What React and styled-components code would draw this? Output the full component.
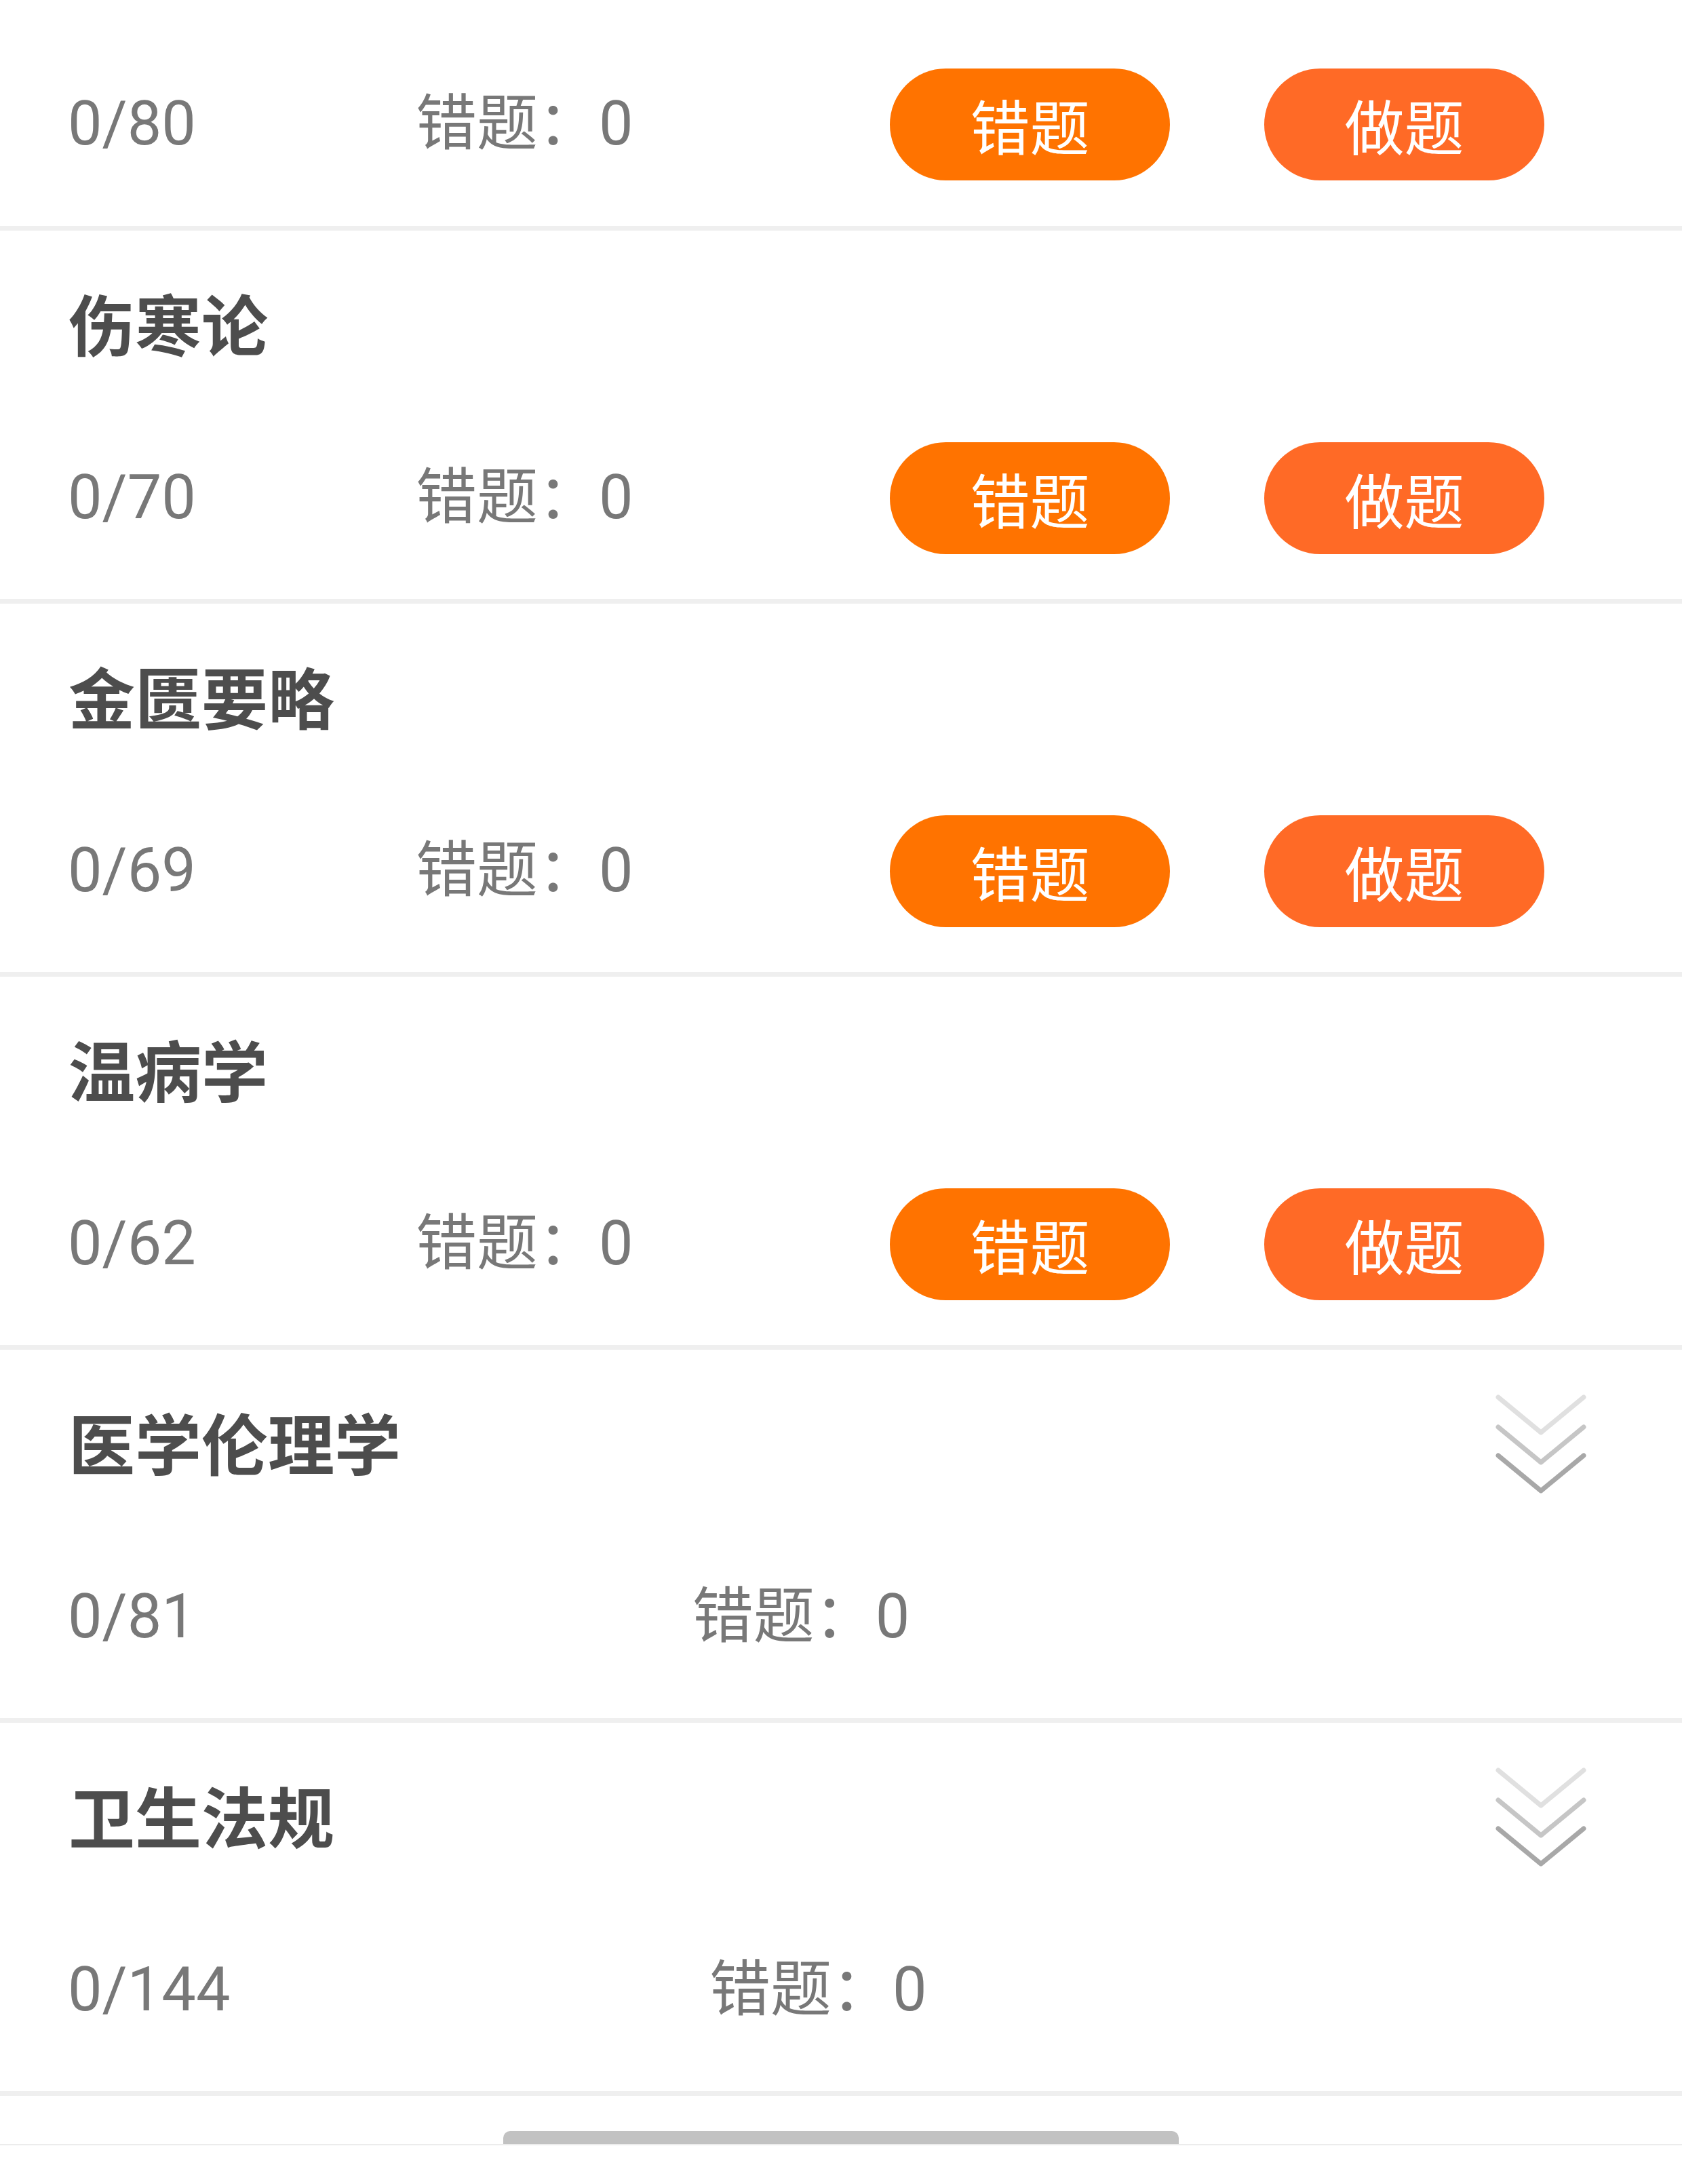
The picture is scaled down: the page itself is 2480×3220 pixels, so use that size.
import React from "react"
import styled, { createGlobalStyle } from "styled-components"

const GlobalStyle = createGlobalStyle`
  html, body {
    margin: 0;
    padding: 0;
    background: #ffffff;
  }
  body {
    font-family: Roboto, "Noto Sans CJK SC", sans-serif;
  }
`

const subjects = [
  { title: null, done: 0, total: 80, wrong: 0, open: true },
  { title: "伤寒论", done: 0, total: 70, wrong: 0, open: true },
  { title: "金匮要略", done: 0, total: 69, wrong: 0, open: true },
  { title: "温病学", done: 0, total: 62, wrong: 0, open: true },
  { title: "医学伦理学", done: 0, total: 81, wrong: 0, open: false },
  { title: "卫生法规", done: 0, total: 144, wrong: 0, open: false },
]

const Chevrons = () => (
  <ChevronIcon viewBox="0 0 136 152" width="136" height="152">
    <path d="M5 8 L68 60 L131 8" stroke="#e0e0e0" />
    <path d="M5 52 L68 104 L131 52" stroke="#c6c6c6" />
    <path d="M5 94 L68 146 L131 94" stroke="#a8a8a8" />
  </ChevronIcon>
)

const Subject = ({ title, done, total, wrong, open }) => (
  <Section $partial={!title}>
    {title && (
      <Header>
        <Title>{title}</Title>
        {!open && <Chevrons />}
      </Header>
    )}
    <Stats $open={open}>
      <Count $open={open}>
        {done}/{total}
      </Count>
      <Wrong $open={open}>错题：{wrong}</Wrong>
      {open && (
        <>
          <Pill $tone="wrong">错题</Pill>
          <Pill $tone="practice">做题</Pill>
        </>
      )}
    </Stats>
  </Section>
)

const App = () => {
  return (
    <Page>
      <GlobalStyle />
      <List>
        {subjects.map((s, i) => (
          <Subject key={i} {...s} />
        ))}
      </List>
      <Footer>
        <HomeBar />
        <FooterLine />
      </Footer>
    </Page>
  )
}

const Page = styled.div`
  width: 2480px;
  min-height: 3220px;
  background: #ffffff;
  display: flex;
  flex-direction: column;
`

const List = styled.div`
  display: flex;
  flex-direction: column;
`

const Section = styled.section`
  padding: ${(p) => (p.$partial ? "100px 0 67px" : "74px 0 66px")};
  border-bottom: 7px solid #efefef;
  display: flex;
  flex-direction: column;
`

const Header = styled.div`
  height: 120px;
  margin-bottom: 117px;
  padding: 0 140px 0 101px;
  display: flex;
  align-items: center;
  justify-content: space-between;
`

const Title = styled.h2`
  margin: 0;
  font-family: "Noto Sans CJK SC", sans-serif;
  font-size: 98px;
  font-weight: 700;
  line-height: 120px;
  color: #4d4d4d;
`

const ChevronIcon = styled.svg`
  flex-shrink: 0;
  margin-top: 8px;
  fill: none;
  stroke-width: 7;
  stroke-linecap: round;
  stroke-linejoin: round;
`

const Stats = styled.div`
  height: 166px;
  padding: ${(p) => (p.$open ? "0 0 0 100px" : "0 407px 0 100px")};
  display: flex;
  align-items: center;
`

const StatText = styled.span`
  font-family: Roboto, "Noto Sans CJK SC", sans-serif;
  font-size: 90px;
  line-height: 1;
  color: #787878;
  white-space: nowrap;
`

const Count = styled(StatText)`
  flex: ${(p) => (p.$open ? "0 0 513px" : "1 1 auto")};
`

const Wrong = styled(StatText)`
  flex: ${(p) => (p.$open ? "0 0 699px" : "1 1 auto")};
`

const Pill = styled.button`
  flex: 0 0 413px;
  height: 165px;
  margin-right: 139px;
  border: none;
  border-radius: 83px;
  padding: 0;
  background: ${(p) => (p.$tone === "wrong" ? "#ff7300" : "#ff6a26")};
  color: #ffffff;
  font-family: "Noto Sans CJK SC", sans-serif;
  font-size: 88px;
  font-weight: 400;
  line-height: 1;
  display: flex;
  align-items: center;
  justify-content: center;

  &:last-child {
    margin-right: 0;
  }
`

const Footer = styled.footer`
  flex: 1;
  display: flex;
  flex-direction: column;
  align-items: center;
`

const HomeBar = styled.div`
  width: 996px;
  height: 19px;
  margin-top: 52px;
  border-radius: 10px 10px 0 0;
  background: #c2c2c2;
`

const FooterLine = styled.div`
  align-self: stretch;
  height: 2px;
  background: #ececec;
`

export default App
